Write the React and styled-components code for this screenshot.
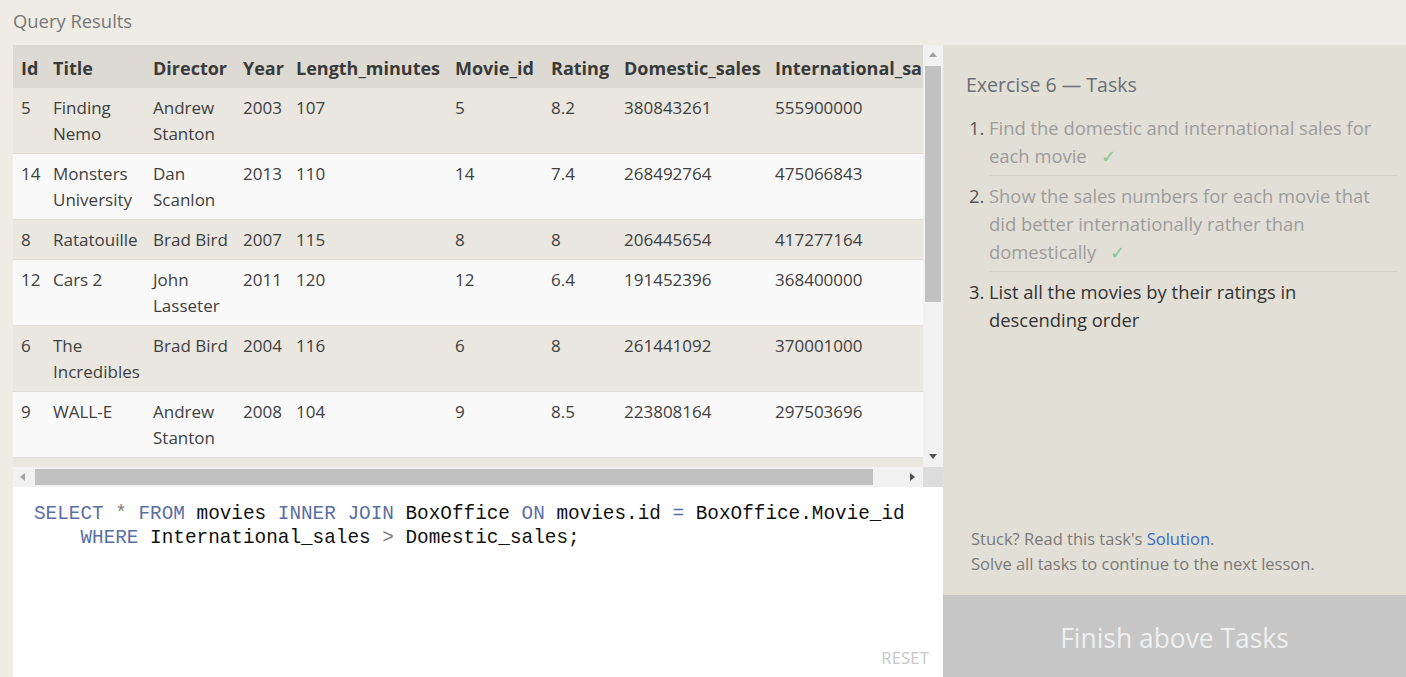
import React from 'react';
import styled, { createGlobalStyle } from 'styled-components';

const GlobalStyle = createGlobalStyle`
  html, body { margin: 0; padding: 0; }
  body {
    background: #efece5;
    font-family: "Open Sans", "Noto Sans", sans-serif;
    overflow: hidden;
  }
`;

const Page = styled.div`
  display: flex;
  height: 677px;
  overflow: hidden;
`;

const LeftColumn = styled.div`
  width: 930px;
  padding-left: 13px;
  display: flex;
  flex-direction: column;
  flex-shrink: 0;
`;

const PanelTitle = styled.div`
  height: 45px;
  line-height: 42px;
  font-size: 18.4px;
  color: #777;
`;

const ResultsRow = styled.div`
  display: flex;
  height: 422px;
  flex-shrink: 0;
`;

const Viewport = styled.div`
  width: 910px;
  overflow: hidden;
  background: #f9f9f9;
`;

const VScroll = styled.div`
  width: 20px;
  background: #f1f1f1;
  display: flex;
  flex-direction: column;
  align-items: center;
`;

const HScrollRow = styled.div`
  display: flex;
  height: 20px;
  flex-shrink: 0;
`;

const HTrack = styled.div`
  width: 910px;
  background: #f1f1f1;
  display: flex;
  align-items: center;
`;

const Corner = styled.div`
  width: 20px;
  background: #dcdcdc;
`;

const ArrowBox = styled.div`
  width: 20px;
  height: 20px;
  display: flex;
  align-items: center;
  justify-content: center;
  flex-shrink: 0;
`;

const Spacer = styled.div`
  flex: 1;
`;

const VThumb = styled.div`
  width: 16px;
  height: 236px;
  margin-top: 1px;
  background: #c1c1c1;
`;

const HThumb = styled.div`
  width: 838px;
  height: 16px;
  margin-left: 2px;
  background: #c1c1c1;
`;

const Table = styled.table`
  border-collapse: collapse;
  table-layout: fixed;
  width: 954px;
`;

const HeadCell = styled.th`
  box-sizing: border-box;
  width: ${p => p.$w}px;
  padding: 10px 0 7px 8px;
  font-size: 18px;
  line-height: 26px;
  font-weight: 700;
  text-align: left;
  color: #3a3a3a;
  background: #dcdad2;
  white-space: nowrap;
  overflow: hidden;
  vertical-align: top;
`;

const Row = styled.tr`
  background: ${p => (p.$odd ? '#e9e7e0' : '#f9f9f9')};
  border-bottom: 1px solid #dfddd5;
`;

const Cell = styled.td`
  box-sizing: border-box;
  padding: 7px 0 6px 8px;
  font-size: 17px;
  line-height: 26px;
  color: #404040;
  vertical-align: top;
`;

const Editor = styled.div`
  flex: 1;
  background: #fff;
  display: flex;
  flex-direction: column;
  padding: 15px 14px 8px 21px;
`;

const Code = styled.pre`
  margin: 0;
  flex: 1;
  font-family: "Liberation Mono", "DejaVu Sans Mono", monospace;
  font-size: 19.35px;
  line-height: 24px;
  color: #111;
`;

const Kw = styled.span`
  color: ${p => (p.$dim ? '#7a7a7a' : '#5a6ea3')};
`;

const ResetRow = styled.div`
  display: flex;
  justify-content: flex-end;
`;

const ResetButton = styled.span`
  font-size: 16.5px;
  color: #c8c8c8;
  letter-spacing: 0.2px;
`;

const RightPanel = styled.div`
  flex: 1;
  margin-top: 45px;
  background: #e2dfd6;
  display: flex;
  flex-direction: column;
`;

const TaskContent = styled.div`
  flex: 1;
  padding: 26px 8px 0 23px;
  display: flex;
  flex-direction: column;
`;

const TaskTitle = styled.div`
  font-size: 19.5px;
  line-height: 28px;
  color: #6b6f77;
`;

const TaskList = styled.ol`
  margin: 15px 0 0 0;
  padding-left: 23px;
`;

const TaskItem = styled.li`
  font-size: 18.4px;
  line-height: 28px;
  color: ${p => (p.$done ? '#555' : '#333')};
  padding-bottom: ${p => (p.$last ? '0' : '5px')};
  margin-bottom: ${p => (p.$last ? '0' : '6px')};
  border-bottom: ${p => (p.$last ? 'none' : '1px solid #d5d2c8')};
`;

const DoneText = styled.span`
  color: #9c9c9c;
`;

const Check = styled.span`
  color: #84c892;
  margin-left: 14px;
`;

const Hint = styled.div`
  padding: 0 0 19px 5px;
  font-size: 16.5px;
  line-height: 25px;
  color: #7a7a7a;
`;

const Link = styled.a`
  color: #3a68c4;
  text-decoration: none;
`;

const FinishButton = styled.div`
  height: 82px;
  background: #c6c6c6;
  color: #efefef;
  font-size: 26.4px;
  display: flex;
  align-items: center;
  justify-content: center;
  padding-top: 4px;
  box-sizing: border-box;
`;

const Arrow = ({ dir, color }) => {
  const pts = {
    up: '0,6 4,1 8,6',
    down: '0,1 4,6 8,1',
    left: '6,0 1,4 6,8',
    right: '1,0 6,4 1,8',
  }[dir];
  return (
    <svg width="8" height="8" viewBox="0 0 8 8">
      <polygon points={pts} fill={color} />
    </svg>
  );
};

const columns = [
  ['Id', 32],
  ['Title', 100],
  ['Director', 90],
  ['Year', 53],
  ['Length_minutes', 159],
  ['Movie_id', 96],
  ['Rating', 73],
  ['Domestic_sales', 151],
  ['International_sales', 200],
];

const rows = [
  [5, 'Finding Nemo', 'Andrew Stanton', 2003, 107, 5, 8.2, 380843261, 555900000],
  [14, 'Monsters University', 'Dan Scanlon', 2013, 110, 14, 7.4, 268492764, 475066843],
  [8, 'Ratatouille', 'Brad Bird', 2007, 115, 8, 8, 206445654, 417277164],
  [12, 'Cars 2', 'John Lasseter', 2011, 120, 12, 6.4, 191452396, 368400000],
  [6, 'The Incredibles', 'Brad Bird', 2004, 116, 6, 8, 261441092, 370001000],
  [9, 'WALL-E', 'Andrew Stanton', 2008, 104, 9, 8.5, 223808164, 297503696],
  [3, 'Toy Story 3', 'Lee Unkrich', 2010, 103, 3, 8.4, 415004880, 648167031],
  [11, 'Up', 'Pete Docter', 2009, 101, 11, 8.3, 293004164, 438338580],
];

export default function App() {
  return (
    <>
      <GlobalStyle />
      <Page>
        <LeftColumn>
          <PanelTitle>Query Results</PanelTitle>
          <ResultsRow>
            <Viewport>
              <Table>
                <thead>
                  <tr>
                    {columns.map(([name, w]) => (
                      <HeadCell key={name} $w={w}>{name}</HeadCell>
                    ))}
                  </tr>
                </thead>
                <tbody>
                  {rows.map((r, i) => (
                    <Row key={r[0]} $odd={i % 2 === 0}>
                      {r.map((v, j) => (
                        <Cell key={j}>{v}</Cell>
                      ))}
                    </Row>
                  ))}
                </tbody>
              </Table>
            </Viewport>
            <VScroll>
              <ArrowBox><Arrow dir="up" color="#a3a3a3" /></ArrowBox>
              <VThumb />
              <Spacer />
              <ArrowBox><Arrow dir="down" color="#505050" /></ArrowBox>
            </VScroll>
          </ResultsRow>
          <HScrollRow>
            <HTrack>
              <ArrowBox><Arrow dir="left" color="#a3a3a3" /></ArrowBox>
              <HThumb />
              <Spacer />
              <ArrowBox><Arrow dir="right" color="#505050" /></ArrowBox>
            </HTrack>
            <Corner />
          </HScrollRow>
          <Editor>
            <Code>
              <Kw>SELECT</Kw> <Kw $dim>*</Kw> <Kw>FROM</Kw> movies <Kw>INNER</Kw> <Kw>JOIN</Kw> BoxOffice <Kw>ON</Kw> movies.id <Kw>=</Kw> BoxOffice.Movie_id{'\n'}
              {'    '}<Kw>WHERE</Kw> International_sales <Kw $dim>&gt;</Kw> Domestic_sales;
            </Code>
            <ResetRow>
              <ResetButton>RESET</ResetButton>
            </ResetRow>
          </Editor>
        </LeftColumn>
        <RightPanel>
          <TaskContent>
            <TaskTitle>Exercise 6 — Tasks</TaskTitle>
            <TaskList>
              <TaskItem $done>
                <DoneText>Find the domestic and international sales for each movie</DoneText>
                <Check>✓</Check>
              </TaskItem>
              <TaskItem $done>
                <DoneText>Show the sales numbers for each movie that did better internationally rather than domestically</DoneText>
                <Check>✓</Check>
              </TaskItem>
              <TaskItem $last>List all the movies by their ratings in descending order</TaskItem>
            </TaskList>
            <Spacer />
            <Hint>
              Stuck? Read this task's <Link href="#">Solution</Link>.<br />
              Solve all tasks to continue to the next lesson.
            </Hint>
          </TaskContent>
          <FinishButton>Finish above Tasks</FinishButton>
        </RightPanel>
      </Page>
    </>
  );
}
